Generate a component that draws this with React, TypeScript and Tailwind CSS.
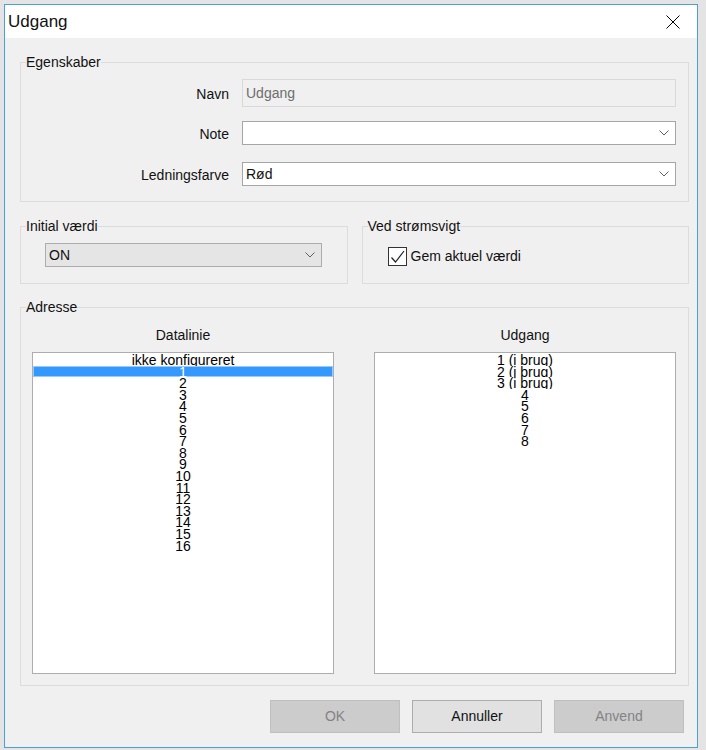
import type { ReactNode } from 'react';

const dataLines = ['ikke konfigureret', ...Array.from({ length: 16 }, (_, i) => String(i + 1))];
const outputs = ['1 (i brug)', '2 (i brug)', '3 (i brug)', '4', '5', '6', '7', '8'];

function Chevron() {
  return (
    <svg width="10" height="6" viewBox="0 0 10 6" className="shrink-0">
      <path d="M0.5 0.5 L5 5 L9.5 0.5" fill="none" stroke="#606060" strokeWidth="1" />
    </svg>
  );
}

function Group({ label, className, children }: { label: string; className?: string; children: ReactNode }) {
  return (
    <div className={`relative border border-[#dcdcdc] ${className ?? ''}`}>
      <span className="absolute left-[5px] top-[-9px] bg-[#f0f0f0] leading-[16px]">{label}</span>
      {children}
    </div>
  );
}

function ListBox({ items, selected }: { items: string[]; selected?: number }) {
  return (
    <div className="h-[322px] border border-[#adadad] bg-white pt-[1px] overflow-hidden">
      {items.map((it, i) => (
        <div
          key={i}
          className={
            i === selected
              ? 'h-[11.6px] overflow-hidden text-center leading-[13px] bg-[#3399ff] text-white shadow-[inset_0_0_0_1px_#99c9ff]'
              : 'h-[11.6px] overflow-hidden text-center leading-[13px] text-black'
          }
        >
          {it}
        </div>
      ))}
    </div>
  );
}

export default function App() {
  return (
    <div className="w-[706px] h-[750px] overflow-hidden bg-[#e4e4e4] pt-[4px] pl-[4px] font-['Liberation_Sans',Arial,sans-serif] text-[14px] text-[#111]">
      <div className="w-[694px] h-[744px] border border-[#4a9fe0] flex flex-col bg-[#f0f0f0]">
        {/* title bar */}
        <div className="h-[33px] bg-white flex items-center justify-between pl-[3px] pr-[17px]">
          <span className="text-[17px] leading-[20px] pt-[1px]">Udgang</span>
          <svg width="14" height="14" viewBox="0 0 14 14">
            <path d="M0.5 0.5 L13.5 13.5 M13.5 0.5 L0.5 13.5" stroke="#000" strokeWidth="1" />
          </svg>
        </div>

        <div className="flex-1 pt-[24px] pl-[15px] pr-[8px] pb-[14px] flex flex-col">
          <Group label="Egenskaber" className="pt-[16px] pb-[15px] pr-[12px]">
            <div className="flex items-center">
              <span className="w-[208px] text-right pt-[2px]">Navn</span>
              <div className="ml-[13px] flex-1 h-[28px] border border-[#d9d9d9] bg-[#f0f0f0] pl-[3px] flex items-center text-[#6d6d6d]">
                Udgang
              </div>
            </div>
            <div className="flex items-center mt-[14px]">
              <span className="w-[208px] text-right pt-[2px]">Note</span>
              <div className="ml-[13px] flex-1 h-[24px] border border-[#a6a6a6] bg-white pl-[3px] pr-[6px] flex items-center justify-between">
                <span />
                <Chevron />
              </div>
            </div>
            <div className="flex items-center mt-[17px]">
              <span className="w-[208px] text-right pt-[2px]">Ledningsfarve</span>
              <div className="ml-[13px] flex-1 h-[24px] border border-[#a6a6a6] bg-white pl-[3px] pr-[6px] flex items-center justify-between">
                <span>Rød</span>
                <Chevron />
              </div>
            </div>
          </Group>

          <div className="grid grid-cols-2 gap-[14px] mt-[24px]">
            <Group label="Initial værdi" className="h-[58px] pt-[16px] pl-[24px] pr-[25px]">
              <div className="h-[24px] border border-[#acacac] bg-[#e5e5e5] pl-[3px] pr-[6px] flex items-center justify-between">
                <span>ON</span>
                <Chevron />
              </div>
            </Group>
            <Group label="Ved strømsvigt" className="h-[58px] pt-[19px] pl-[25px]">
              <div className="flex items-center gap-[4px]">
                <div className="w-[19px] h-[19px] border border-[#333333] bg-white">
                  <svg width="17" height="17" viewBox="0 0 17 17">
                    <path d="M2.5 9.5 L6.5 14 L15 3" fill="none" stroke="#222" strokeWidth="1.2" />
                  </svg>
                </div>
                <span>Gem aktuel værdi</span>
              </div>
            </Group>
          </div>

          <Group label="Adresse" className="mt-[23px] pt-[19px] pl-[11px] pr-[12px] pb-[11px]">
            <div className="grid grid-cols-2 gap-[40px]">
              <div className="flex flex-col">
                <div className="h-[16px] leading-[16px] text-center">Datalinie</div>
                <div className="mt-[9px]">
                  <ListBox items={dataLines} selected={1} />
                </div>
              </div>
              <div className="flex flex-col">
                <div className="h-[16px] leading-[16px] text-center">Udgang</div>
                <div className="mt-[9px]">
                  <ListBox items={outputs} />
                </div>
              </div>
            </div>
          </Group>

          <div className="flex justify-end gap-[12px] mt-[14px] mr-[5px]">
            <div className="w-[130px] h-[33px] border border-[#bfbfbf] bg-[#cccccc] text-[#838383] flex items-center justify-center">OK</div>
            <div className="w-[130px] h-[33px] border border-[#adadad] bg-[#e1e1e1] flex items-center justify-center">Annuller</div>
            <div className="w-[130px] h-[33px] border border-[#bfbfbf] bg-[#cccccc] text-[#838383] flex items-center justify-center">Anvend</div>
          </div>
        </div>
      </div>
    </div>
  );
}
